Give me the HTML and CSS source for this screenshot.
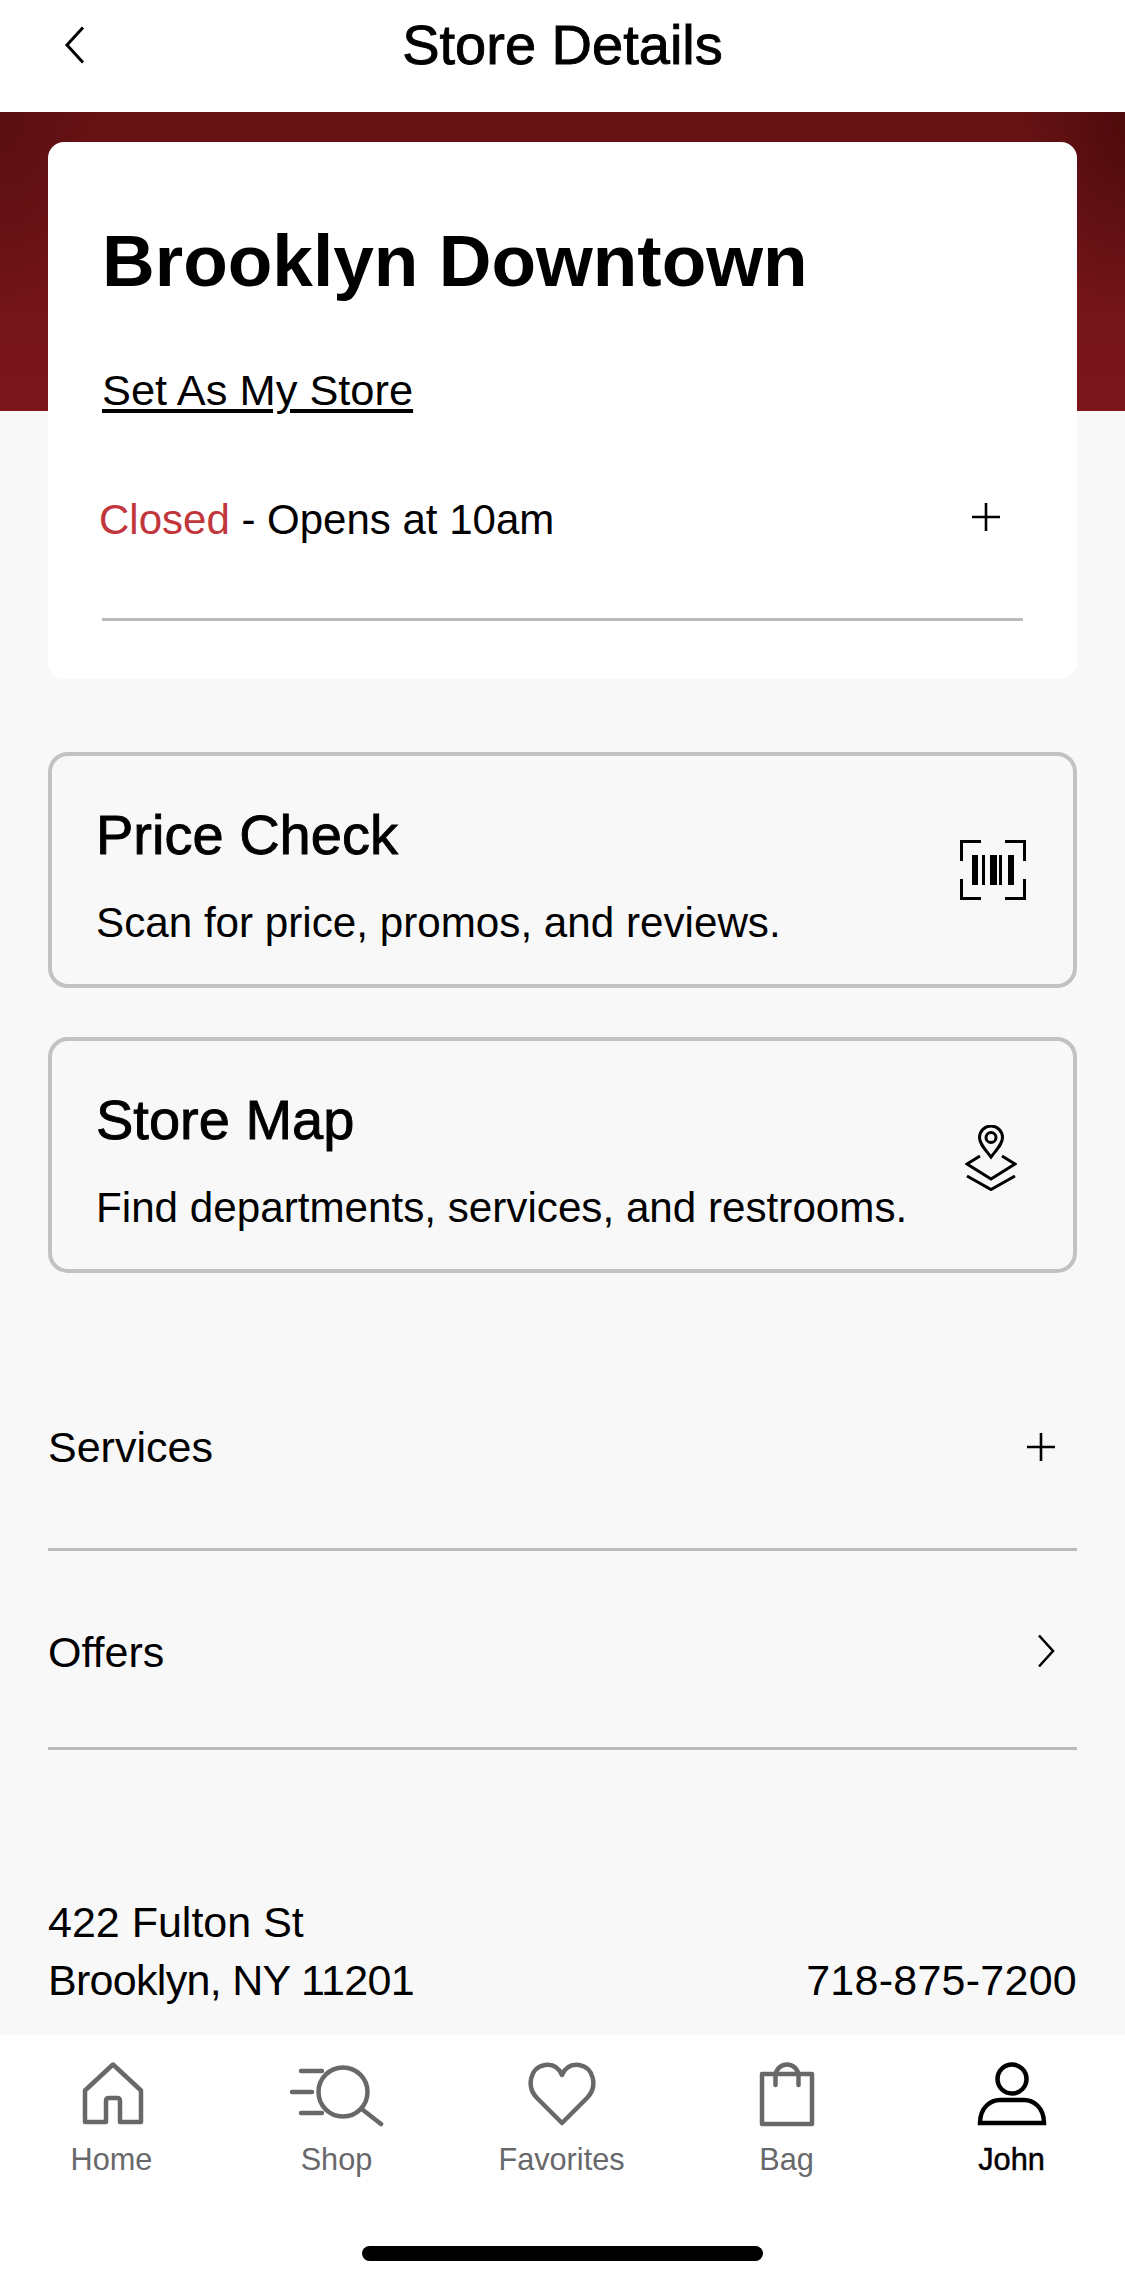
FILE: index.html
```html
<!DOCTYPE html>
<html lang="en">
<head>
<meta charset="UTF-8">
<meta name="viewport" content="width=device-width, initial-scale=1.0">
<title>Store Details</title>
<link rel="stylesheet" href="styles.css">
</head>
<body>

<div class="page">
  <header class="topbar">
    <svg class="back" width="24" height="38" viewBox="0 0 24 38"><path d="M21 1.500 5 19l16 17.500" fill="none" stroke="#000" stroke-width="3"/></svg>
    <h1 class="topbar-title">Store Details</h1>
  </header>

  <main class="content">
    <section class="store-card">
      <h2 class="store-name">Brooklyn Downtown</h2>
      <a class="store-link">Set As My Store</a>
      <div class="hours">
        <span class="hours-text"><span class="closed">Closed</span> - Opens at 10am</span>
        <svg class="hours-plus" width="28" height="28" viewBox="0 0 28 28"><path d="M14 0v28M0 14h28" stroke="#000" stroke-width="2.600"/></svg>
      </div>
    </section>

    <a class="tool-card">
      <div class="tool-body">
        <div class="tool-title">Price Check</div>
        <div class="tool-text">Scan for price, promos, and reviews.</div>
      </div>
      <svg class="tool-icon" width="66" height="60" viewBox="0 0 66 60">
        <path d="M1.500 21V1.500H21M45 1.500h19.500V21M1.500 39v19.500H21M45 58.500h19.500V39" fill="none" stroke="#000" stroke-width="3"/>
        <path d="M12 15h6v30h-6zM22 15h3v30h-3zM30 15h7v30h-7zM39 15h3v30h-3zM48 15h6v30h-6z" fill="#000"/>
      </svg>
    </a>

    <a class="tool-card tool-card-map">
      <div class="tool-body">
        <div class="tool-title">Store Map</div>
        <div class="tool-text">Find departments, services, and restrooms.</div>
      </div>
      <svg class="tool-icon map-icon" width="52" height="66" viewBox="0 0 52 66">
        <path d="M26 32C20 24 14.500 19 14.500 12.500a11.500 11.500 0 0 1 23 0C37.500 19 32 24 26 32Z" fill="none" stroke="#000" stroke-width="3"/>
        <circle cx="26" cy="12.500" r="5" fill="none" stroke="#000" stroke-width="3"/>
        <path d="M15 31 2 39l24 15 24-15-13-8M2 51l24 13.500L50 51" fill="none" stroke="#000" stroke-width="3"/>
      </svg>
    </a>

    <div class="row row-services">
      <span>Services</span>
      <svg width="28" height="28" viewBox="0 0 28 28"><path d="M14 0v28M0 14h28" stroke="#000" stroke-width="2.600"/></svg>
    </div>
    <div class="row row-offers">
      <span class="offers-label">Offers</span>
      <svg class="offers-arrow" width="18" height="34" viewBox="0 0 18 34"><path d="M2 1.500 16 17 2 32.500" fill="none" stroke="#000" stroke-width="2.600"/></svg>
    </div>

    <div class="address">
      <div>422 Fulton St<br><span class="city">Brooklyn, NY 11201</span></div>
      <div class="phone">718-875-7200</div>
    </div>
  </main>

  <nav class="tabbar">
    <div class="tabs">
      <a class="tab">
        <svg class="home-icon" width="66" height="66" viewBox="0 0 66 66"><path d="M33 3.500 5 29.500V61h21V40q0-3 3-3h8q3 0 3 3v21h21V29.500Z" fill="none" stroke="currentColor" stroke-width="4.500" stroke-linejoin="round"/></svg>
        <span>Home</span>
      </a>
      <a class="tab">
        <svg width="96" height="66" viewBox="0 0 96 66"><circle cx="54" cy="31" r="24.500" fill="none" stroke="currentColor" stroke-width="4.500"/><path d="M74 49l18 14M12 10h21M3 31h20M12 52h21" fill="none" stroke="currentColor" stroke-width="4.500" stroke-linecap="round"/></svg>
        <span>Shop</span>
      </a>
      <a class="tab">
        <svg width="70" height="66" viewBox="0 0 70 66"><path d="M35 62 10 37C-1 26 3 6 18 4c8-1 14 3 17 10 3-7 9-11 17-10 15 2 19 22 8 33Z" fill="none" stroke="currentColor" stroke-width="4.500" stroke-linejoin="round"/></svg>
        <span>Favorites</span>
      </a>
      <a class="tab">
        <svg width="56" height="66" viewBox="0 0 56 66"><path d="M3 13h50v50H3Z" fill="none" stroke="currentColor" stroke-width="4.500" stroke-linejoin="round"/><path d="M16.500 24V15a11.500 11.500 0 0 1 23 0v9" fill="none" stroke="currentColor" stroke-width="4.500" stroke-linecap="round"/></svg>
        <span>Bag</span>
      </a>
      <a class="tab tab-active">
        <svg width="70" height="66" viewBox="0 0 70 66"><circle cx="35" cy="18" r="14.500" fill="none" stroke="currentColor" stroke-width="4.500"/><path d="M3 62c0-16 11-23 20-23h24c9 0 20 7 20 23Z" fill="none" stroke="currentColor" stroke-width="4.500"/></svg>
        <span>John</span>
      </a>
    </div>
    <div class="home-indicator"></div>
  </nav>
</div>

</body>
</html>
```

FILE: styles.css
```css
* {
  box-sizing: border-box;
}
body {
  margin: 0;
  background-color: #f8f8f8;
  font-family: "Liberation Sans", Arial, sans-serif;
  color: #000;
}
.page {
  display: flex;
  flex-direction: column;
  height: 2284px;
  overflow: hidden;
}
.topbar {
  display: flex;
  justify-content: center;
  align-items: center;
  position: relative;
  height: 112px;
  padding-bottom: 22px;
  background-color: #fff;
}
.topbar .back {
  position: absolute;
  left: 62px;
  top: 26px;
}
.topbar-title {
  margin: 0;
  font-size: 56px;
  line-height: 66px;
  font-weight: 400;
  -webkit-text-stroke: 0.9px #000;
}
.content {
  flex: 1;
  padding: 30px 48px 0;
  background:
    radial-gradient(ellipse 110px 200px at 0 0, #5a0e11, transparent),
    radial-gradient(ellipse 110px 200px at 100% 0, #4f0b0d, transparent),
    linear-gradient(#671214, #7c161c),
    #f8f8f8;
  background-size: 100% 299px, 100% 299px, 100% 299px, auto;
  background-repeat: no-repeat;
}
.store-card {
  height: 537px;
  padding: 77px 54px 0;
  background-color: #fff;
  border-radius: 16px;
}
.store-name {
  margin: 0;
  font-size: 73px;
  line-height: 84px;
  font-weight: 700;
}
.store-link {
  display: inline-block;
  margin-top: 62px;
  font-size: 43.400px;
  line-height: 50px;
  text-decoration: underline;
  text-underline-offset: 4px;
  text-decoration-thickness: 4px;
}
.hours {
  display: flex;
  justify-content: space-between;
  align-items: center;
  width: 921px;
  height: 176px;
  margin-top: 30px;
  padding: 0 23px 24px 0;
  font-size: 42px;
  border-bottom: 3px solid #bbb;
}
.hours-text {
  margin-left: -3px;
}
.hours-plus {
  margin-bottom: 6px;
}
.closed {
  color: #c1363b;
}
.tool-card {
  display: flex;
  justify-content: space-between;
  align-items: center;
  height: 236px;
  margin-top: 73px;
  padding: 0 47px 0 44px;
  border: 4px solid #c2c2c2;
  border-radius: 20px;
}
.tool-card-map {
  margin-top: 49px;
}
.tool-body {
  padding-top: 10px;
}
.tool-title {
  font-size: 56px;
  line-height: 66px;
  -webkit-text-stroke: 0.9px #000;
}
.tool-text {
  margin-top: 30px;
  font-size: 42.200px;
  line-height: 50px;
}
.map-icon {
  margin-top: 6px;
  margin-right: 9px;
}
.row {
  display: flex;
  justify-content: space-between;
  align-items: center;
  padding-right: 22px;
  font-size: 43px;
  border-bottom: 3px solid #bbb;
}
.row-services {
  height: 278px;
  padding-top: 73px;
}
.row-offers {
  height: 199px;
}
.offers-label {
  padding-top: 6px;
}
.offers-arrow {
  margin-top: 3px;
}
.address {
  display: flex;
  justify-content: space-between;
  align-items: flex-end;
  margin-top: 143px;
  font-size: 43px;
  line-height: 58px;
}
.city {
  letter-spacing: -0.7px;
}
.phone {
  letter-spacing: 0.25px;
}
.tabbar {
  height: 249px;
  background-color: #fff;
}
.tabs {
  display: grid;
  grid-template-columns: repeat(5, 225px);
  padding-top: 26px;
  margin-left: -1px;
}
.tab {
  display: flex;
  flex-direction: column;
  align-items: center;
  color: #68686b;
  font-size: 30.700px;
  line-height: 36px;
}
.tab span {
  margin-top: 15px;
}
.home-icon {
  margin-left: 3px;
}
.tab-active {
  color: #000;
}
.tab-active span {
  -webkit-text-stroke: 0.5px #000;
}
.home-indicator {
  width: 401px;
  height: 15px;
  margin: 68px auto 0;
  border-radius: 8px;
  background-color: #000;
}
```
